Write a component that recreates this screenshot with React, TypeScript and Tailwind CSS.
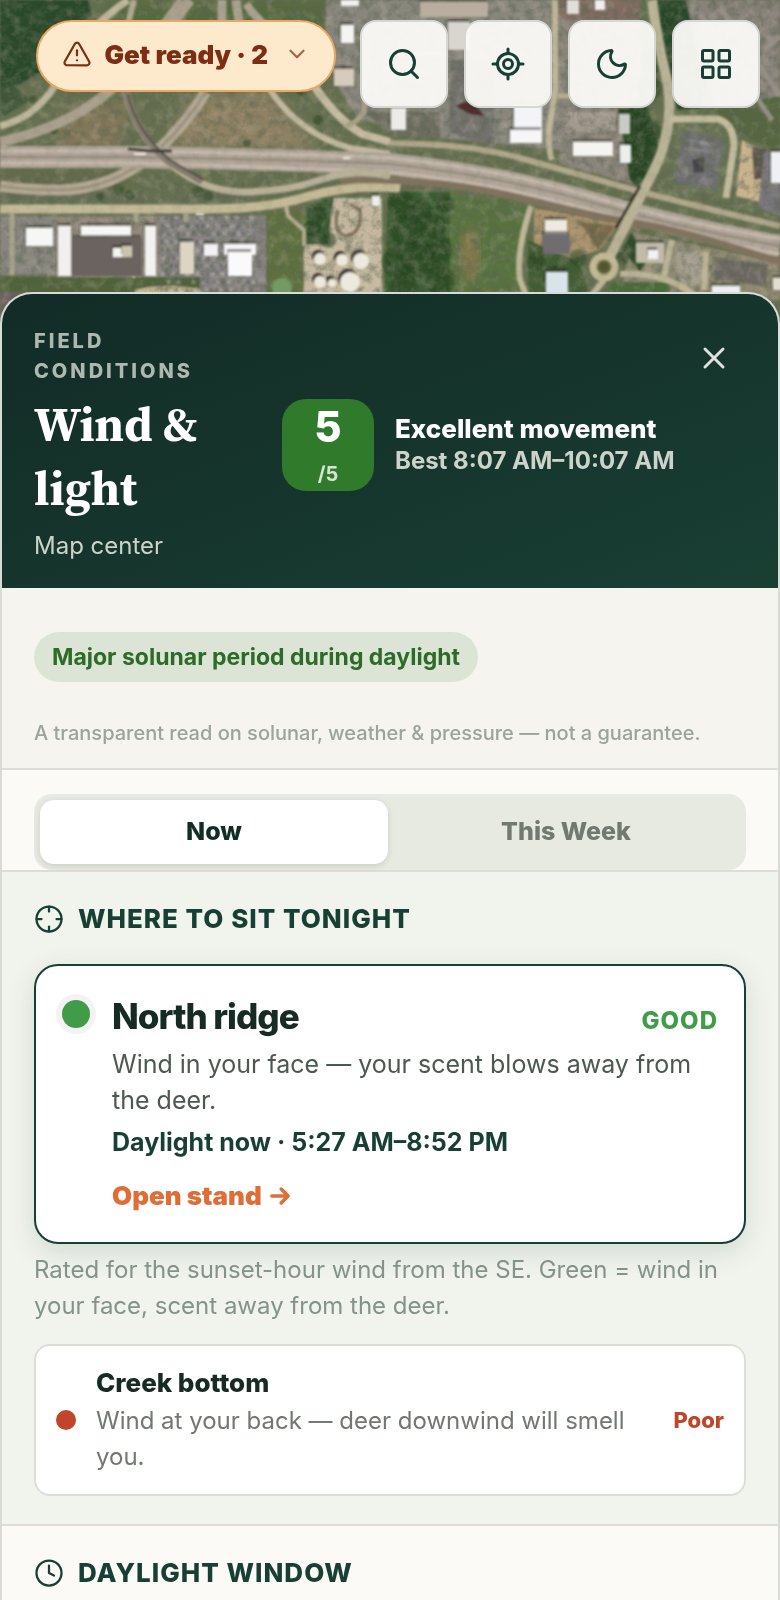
import type { ReactNode } from 'react';
import {
  ChevronDown,
  Clock,
  Crosshair,
  LayoutGrid,
  LocateFixed,
  Moon,
  Search,
  TriangleAlert,
  X,
} from 'lucide-react';

type Block = [x: number, y: number, w: number, h: number, fill: string];

const roofs: Block[] = [
  [26, 228, 27, 18, '#f6f6f5'],
  [58, 226, 13, 50, '#f1f0ee'],
  [81, 226, 50, 10, '#f7f7f6'],
  [145, 226, 11, 50, '#f3f2f0'],
  [72, 238, 70, 38, '#6b6460'],
  [113, 248, 12, 9, '#f5f4f0'],
  [122, 246, 10, 11, '#cbc3ae'],
  [180, 242, 14, 32, '#ddd5c2'],
  [204, 244, 14, 12, '#f3f2f2'],
  [224, 244, 32, 11, '#f6f6f6'],
  [228, 252, 24, 24, '#fafafa'],
  [341, 25, 13, 18, '#f4f4f2'],
  [334, 69, 20, 17, '#d6cbbd'],
  [341, 0, 18, 6, '#f3f1ee'],
  [420, 2, 68, 15, '#b9ad9f'],
  [448, 22, 22, 28, '#d9d5cf'],
  [391, 108, 15, 22, '#ebebe8'],
  [514, 106, 28, 27, '#f2f4f6'],
  [510, 130, 32, 13, '#f6f6f6'],
  [573, 142, 40, 14, '#f5f4f1'],
  [619, 114, 11, 20, '#c8ccc4'],
  [620, 145, 11, 18, '#eceeee'],
  [567, 0, 12, 14, '#e2dfda'],
  [595, 0, 10, 10, '#f0efed'],
  [545, 220, 22, 14, '#eeeae2'],
  [543, 234, 27, 20, '#6f6d70'],
  [546, 272, 22, 22, '#d9e3ea'],
  [636, 243, 28, 20, '#c2bba9'],
  [648, 250, 10, 9, '#f1f2f4'],
  [712, 286, 28, 12, '#edeff2'],
  [771, 152, 12, 31, '#eef0f4'],
  [773, 278, 12, 12, '#e4ded1'],
  [372, 196, 8, 10, '#efeeec'],
];

const trees: [number, number, number][] = [
  [402, 205, 14], [420, 212, 12], [408, 232, 17], [434, 226, 12], [398, 262, 16],
  [418, 258, 18], [438, 250, 14], [445, 205, 9], [440, 280, 15], [404, 286, 14],
  [628, 205, 7], [640, 110, 10], [648, 132, 13], [636, 152, 12], [640, 172, 11],
  [660, 20, 9], [654, 60, 13], [650, 88, 12], [536, 262, 9], [556, 276, 12],
  [578, 258, 9], [320, 212, 9], [312, 228, 9], [328, 240, 8], [622, 258, 7],
  [118, 190, 6], [130, 195, 5], [198, 192, 6], [208, 196, 5], [100, 197, 4],
  [302, 90, 6], [318, 120, 5], [247, 143, 4], [54, 130, 4], [33, 100, 4],
];

const cars = Array.from({ length: 190 }, (_, i) => {
  const column = i % 19;
  const row = Math.floor(i / 19);
  return { x: 160 + column * 5 + (row % 3), y: 216 + row * 8, light: (i * 7) % 5 < 2 };
});

function Satellite() {
  return (
    <svg
      className="absolute inset-x-0 top-0 h-[340px] w-full"
      viewBox="0 0 780 340"
      preserveAspectRatio="xMidYMin slice"
      aria-hidden="true"
    >
      <defs>
        <filter id="grain" x="0" y="0" width="100%" height="100%">
          <feTurbulence type="fractalNoise" baseFrequency="0.11" numOctaves="4" seed="8" />
          <feColorMatrix values="0 0 0 0 0.1  0 0 0 0 0.13  0 0 0 0 0.08  1.9 0 0 0 -0.8" />
        </filter>
        <filter id="glints" x="0" y="0" width="100%" height="100%">
          <feTurbulence type="fractalNoise" baseFrequency="0.09" numOctaves="3" seed="31" />
          <feColorMatrix values="0 0 0 0 0.72  0 0 0 0 0.6  0 0 0 0 0.5  0 1.8 0 0 -0.85" />
        </filter>
        <filter id="soften">
          <feGaussianBlur stdDeviation="0.8" />
        </filter>
        <filter id="blotch">
          <feGaussianBlur stdDeviation="7" />
        </filter>
      </defs>

      <rect width="780" height="340" fill="#667050" />

      <g filter="url(#blotch)">
        <path d="M60 110L130 100 120 150H60z" fill="#83775a" />
        <path d="M185 100L270 92 320 150H170z" fill="#8f8163" />
        <path d="M110 0H330V60H90z" fill="#56693f" />
        <path d="M0 170H130V190H0z" fill="#62694b" />
        <ellipse cx="500" cy="240" rx="18" ry="46" fill="#52703c" />
        <ellipse cx="284" cy="260" rx="15" ry="34" fill="#6c6d44" />
      </g>

      <g filter="url(#soften)">
        <path d="M0 0H88L92 14 62 38 44 70 20 84 0 88z" fill="#2b4a2b" />
        <path d="M0 88L14 86 30 100 4 116 0 112z" fill="#3d5737" />
        <path d="M326 0H560V150L420 136 390 128 358 118 340 90 326 50z" fill="#89867e" />
        <path d="M365 112H440V138L390 134z" fill="#6e6e60" />
        <path d="M450 60H494V148L450 132z" fill="#73716c" />
        <path d="M560 0H640V186L560 164z" fill="#8a847a" />
        <path d="M566 112H616V132H566z" fill="#a3998f" />
        <path d="M556 0H640V20H556z" fill="#806c62" />
        <path d="M618 108H648L662 160 640 190 630 180z" fill="#2f4c2b" />
        <path d="M648 0H690L712 70 700 108 678 110z" fill="#2c4a2b" />
        <path d="M686 0H780V150L744 126 716 108 700 60z" fill="#88827a" />
        <path d="M710 108L780 96V150L746 138z" fill="#55663f" />
        <path d="M0 216H60V275H0z" fill="#898680" />
        <path d="M56 216H160V280H56z" fill="#92887c" />
        <path d="M158 216H266V292H204L158 278z" fill="#868382" />
        <path d="M0 277H200V300H0z" fill="#4f6439" />
        <path d="M135 290Q165 282 203 290V300H135z" fill="#c3b894" />
        <path d="M266 212H306V300H266z" fill="#5f7040" />
        <path d="M304 245H382V300H304z" fill="#c5b8a0" />
        <path d="M330 198H382V248H330z" fill="#c3b79f" />
        <path d="M306 206L334 196 328 244H306z" fill="#3a5831" />
        <path d="M388 192L450 192 456 300H384z" fill="#3b5b31" />
        <path d="M450 194L526 208 520 300H450z" fill="#58723f" />
        <path d="M534 208L620 222 600 250 560 262 534 250z" fill="#a9916d" />
        <path d="M580 222L616 226 598 250z" fill="#786b4b" />
        <path d="M528 240L580 262 590 300H528z" fill="#3f5b33" />
        <path d="M632 232L780 262V300H620z" fill="#8f8a72" />
        <path d="M622 250L632 232 646 262 640 272z" fill="#2f4c2a" />
        <path d="M612 282H670V300H604z" fill="#4c6b3a" />
        <path d="M676 128L728 136 722 196 672 190z" fill="#6d7658" />
        <path d="M684 130L724 140 716 188 674 184z" fill="#706f71" />
        <path d="M692 160L704 157 704 172 694 173z" fill="#474549" />
        <path d="M686 140L714 145M684 148L712 152" stroke="#85848a" strokeWidth="3" />
        <path d="M742 140L762 150 760 202 736 196z" fill="#c9b38d" />
        <path d="M752 146L766 150 764 178 754 180z" fill="#5c5249" />
        <path d="M764 152H780V216L758 208z" fill="#7a777d" />
        <path d="M716 258L768 264 766 286 714 280z" fill="#6c6862" />
        <path d="M674 246L704 252 708 284 680 290z" fill="#a39d8d" />
        <path d="M0 292H26L16 320H0z" fill="#6b6060" />
      </g>
      <ellipse cx="470" cy="254" rx="9" ry="26" fill="#a07d55" opacity="0.8" filter="url(#blotch)" />

      {trees.map(([cx, cy, r]) => (
        <circle key={`${cx}-${cy}`} cx={cx} cy={cy} r={r} fill="#24401f" opacity="0.5" filter="url(#soften)" />
      ))}
      <g filter="url(#soften)">
        {cars.map(({ x, y, light }) => (
          <rect key={`${x}-${y}`} x={x} y={y} width="3" height="4" fill={light ? '#bdbabc' : '#5b5656'} opacity="0.5" />
        ))}
      </g>

      <rect width="780" height="340" filter="url(#grain)" opacity="0.6" />
      <rect width="780" height="340" filter="url(#glints)" opacity="0.3" />

      <g fill="none" strokeLinejoin="round" filter="url(#soften)">
        <path d="M0 126Q42 116 62 72 84 30 128 0" stroke="#beb89d" strokeWidth="7" />
        <path d="M0 142Q66 128 108 92T190 0" stroke="#aaa18e" strokeWidth="10" />
        <path d="M134 0L124 40 94 88" stroke="#b0a892" strokeWidth="6" />
        <path d="M206 92Q186 124 156 152 112 190 58 190 24 190 0 186" stroke="#b3a994" strokeWidth="11" />
        <path d="M206 92Q186 124 156 152 112 190 58 190 24 190 0 186" stroke="#958b79" strokeWidth="2" />
        <path d="M182 0L160 30M222 0V30M236 0L240 30" stroke="#aaa28f" strokeWidth="9" />
        <path d="M246 4Q262 26 278 34" stroke="#aca48f" strokeWidth="8" />
        <path d="M270 90Q300 134 350 148L390 154" stroke="#c2b9a0" strokeWidth="6" />
        <path d="M306 74Q334 118 362 134L390 142" stroke="#c6bca2" strokeWidth="8" />
        <path d="M0 209H200Q262 210 306 197T400 188" stroke="#c5ba98" strokeWidth="9" />
        <path d="M0 157H130Q300 160 390 164 500 176 590 202T780 246" stroke="#b0a597" strokeWidth="22" />
        <path d="M0 157H130Q300 160 390 164 500 176 590 202T780 246" stroke="#93887c" strokeWidth="2" />
        <path d="M0 163H130Q300 168 390 172 500 184 590 210T780 254" stroke="#c7baad" strokeWidth="3" />
        <path d="M0 151H130Q300 154 390 158 500 169 590 196T780 239" stroke="#c6bbad" strokeWidth="3" />
        <path d="M340 180Q440 178 520 198T640 224 780 262" stroke="#81735e" strokeWidth="7" />
        <path d="M125 90Q134 132 168 162 200 190 240 192 286 192 320 180T390 176" stroke="#bab199" strokeWidth="7" />
        <path d="M125 90Q134 132 168 162L202 182" stroke="#857c70" strokeWidth="6" />
        <path d="M128 94Q137 132 170 160L204 180" stroke="#4f4842" strokeWidth="2" />
        <path d="M390 143Q470 144 520 158T620 186 780 226" stroke="#b1a78d" strokeWidth="6" />
        <path d="M128 149L150 151 172 151" stroke="#3b3935" strokeWidth="3" />
        <path d="M555 0V90L549 130Q548 150 552 160" stroke="#bfb69a" strokeWidth="6" />
        <path d="M390 54H448M558 96H574" stroke="#b9b092" strokeWidth="5" />
        <path d="M368 40Q366 90 364 112 356 124 346 126" stroke="#a9a088" strokeWidth="5" />
        <path d="M652 0Q658 46 668 84 674 130 654 170L610 256" stroke="#bbb499" strokeWidth="10" />
        <path d="M640 186L616 228" stroke="#3b332c" strokeWidth="3" />
        <path d="M670 119H718Q734 124 734 146L726 198" stroke="#c3bb9e" strokeWidth="7" />
        <path d="M531 206Q516 250 520 280L528 300" stroke="#c0b899" strokeWidth="6" />
        <path d="M620 274Q670 272 700 300M604 280L588 300M664 276L672 240M706 252L704 290" stroke="#beb598" strokeWidth="6" />
        <path d="M286 206L288 216 304 230V246" stroke="#b7af92" strokeWidth="4" />
        <path d="M338 210Q332 232 346 236 362 234 360 210L350 204" stroke="#80705b" strokeWidth="3" />
        <circle cx="604" cy="267" r="11" stroke="#c3b997" strokeWidth="7" fill="#6a6a3d" />
        <circle cx="604" cy="267" r="5" fill="#4f5630" />
        <path d="M12 214V275M186 214V222M136 214V222" stroke="#aaa58d" strokeWidth="5" />
        <path d="M128 256L134 278" stroke="#cfcac0" strokeWidth="2" />
        <path d="M700 14L772 120M720 8L780 96M764 50L780 36" stroke="#989087" strokeWidth="5" />
      </g>

      <rect width="780" height="340" filter="url(#grain)" opacity="0.15" />

      <g filter="url(#soften)">
        {roofs.map(([x, y, w, h, fill]) => (
          <g key={`${x}-${y}`}>
            <rect x={x - 1} y={y - 3} width={w} height={h} fill="#2d2825" opacity="0.5" />
            <rect x={x} y={y} width={w} height={h} fill={fill} />
          </g>
        ))}
        {[[320, 259, 6], [342, 260, 6], [361, 261, 8], [320, 282, 6], [332, 283, 4], [350, 282, 10]].map(
          ([cx, cy, r]) => (
            <g key={`${cx}-${cy}`}>
              <circle cx={cx - 2} cy={cy - 3} r={r} fill="#3b332b" />
              <circle cx={cx} cy={cy} r={r} fill="#eee9de" />
            </g>
          ),
        )}
        <circle cx="282" cy="288" r="10" fill="#719b62" />
        <path d="M465 102L474 103 484 116 470 114 456 106z" fill="#4f2f2e" />
        <path d="M134 154H146M343 158H350M196 214H204" stroke="#f0eee8" strokeWidth="2" />
      </g>
    </svg>
  );
}

function MapButton({ label, children }: { label: string; children: ReactNode }) {
  return (
    <button
      type="button"
      aria-label={label}
      className="flex size-22 shrink-0 items-center justify-center rounded-2xl border-2 border-[#d5d8d1] bg-[#fbfaf7]/95 text-[#173f33]"
    >
      {children}
    </button>
  );
}

function SectionTitle({ icon, children }: { icon: ReactNode; children: ReactNode }) {
  return (
    <h2 className="flex items-center gap-[14px] text-[26px] leading-[38px] font-extrabold tracking-[1px] text-[#173f33]">
      {icon}
      {children}
    </h2>
  );
}

export default function App() {
  return (
    <div className="relative flex min-h-screen flex-col overflow-hidden bg-[#fbfaf6] font-['Inter','Liberation_Sans',sans-serif] text-[#172b25]">
      <Satellite />

      <header className="relative flex items-start justify-end gap-4 px-5 pt-5">
        <button
          type="button"
          className="mr-2 flex h-18 items-center gap-3 rounded-full border-2 border-[#eba765] bg-[#fdeacc] px-6 pb-1 text-[26px] font-black text-[#7d2d12]"
        >
          <TriangleAlert size={30} strokeWidth={1.8} />
          <span>Get ready · 2</span>
          <ChevronDown size={26} className="ml-1 opacity-70" />
        </button>
        <MapButton label="Search"><Search size={36} /></MapButton>
        <MapButton label="My location"><LocateFixed size={36} /></MapButton>
        <MapButton label="Dark mode"><Moon size={36} /></MapButton>
        <MapButton label="Layers"><LayoutGrid size={36} /></MapButton>
      </header>

      <main className="relative mt-46 grow overflow-hidden rounded-t-[32px] border-2 border-b-0 border-[#d9dcd6] bg-[#fbfaf6]">
        <section className="flex items-start bg-linear-160 from-[#122b26] to-[#193f33] px-8 pt-8 pb-6 text-white">
          <div className="w-50 shrink-0">
            <p className="text-[20px] leading-[30px] font-extrabold tracking-[3px] text-[#adb8b0] uppercase">
              Field conditions
            </p>
            <h1 className="mt-[6px] font-['Source_Serif_4','Source_Serif_Pro','Liberation_Serif',serif] text-[48px] leading-16 font-bold">
              Wind &amp; light
            </h1>
            <p className="mt-2 text-[24px] leading-9 text-[#ccd3cb]">Map center</p>
          </div>
          <div className="ml-12 flex grow items-center gap-[21px] self-center">
            <div className="flex size-23 shrink-0 flex-col items-center justify-between rounded-3xl bg-[#307a2b]">
              <strong className="text-[42px] leading-[56px] font-extrabold">5</strong>
              <span className="text-[20px] leading-[34px] font-bold text-[#d5e5d3]">/5</span>
            </div>
            <div>
              <p className="text-[26px] leading-8 font-extrabold">Excellent movement</p>
              <p className="text-[24px] leading-8 font-bold text-[#cdd3cb]">Best 8:07 AM–10:07 AM</p>
            </div>
          </div>
          <button type="button" aria-label="Close" className="flex size-16 shrink-0 items-center justify-center text-[#dfe2dc]">
            <X size={36} />
          </button>
        </section>

        <section className="border-b-2 border-[#dddcd6] bg-[#f6f4ef] px-8 pt-11 pb-5">
          <p className="w-fit rounded-full bg-[#dce5d5] px-[18px] text-[23px] leading-[50px] font-bold text-[#2d6b28]">
            Major solunar period during daylight
          </p>
          <p className="mt-9 text-[20px] leading-[30px] font-medium text-[#9ba39b]">
            A transparent read on solunar, weather &amp; pressure — not a guarantee.
          </p>
        </section>

        <div className="border-b-2 border-[#dddcd6] px-8 pt-6">
          <div role="tablist" className="grid grid-cols-2 gap-1 rounded-[18px] bg-[#e7eae1] p-[6px] text-[25px] font-extrabold">
            <button type="button" role="tab" aria-selected="true" className="h-16 rounded-[14px] bg-white text-[#112d26] shadow-[0_2px_6px_rgba(20,45,35,0.14)]">
              Now
            </button>
            <button type="button" role="tab" aria-selected="false" className="h-16 rounded-[14px] text-[#717971]">
              This Week
            </button>
          </div>
        </div>

        <section className="border-b-2 border-[#dddcd6] bg-[#f1f4ed] px-8 pt-7 pb-7">
          <SectionTitle icon={<Crosshair size={30} strokeWidth={1.8} />}>WHERE TO SIT TONIGHT</SectionTitle>

          <article className="mt-[26px] flex items-start gap-[22px] rounded-3xl border-2 border-[#173f33] bg-white px-[26px] pt-[26px] pb-7 shadow-[0_8px_28px_rgba(23,63,51,0.14)]">
            <span className="mt-2 size-7 shrink-0 rounded-full bg-[#419c48] ring-6 ring-[#f3f3f4]" />
            <div className="grow">
              <div className="flex items-baseline justify-between">
                <h3 className="text-[35px] leading-12 font-extrabold tracking-[-1px]">North ridge</h3>
                <strong className="text-[24px] font-extrabold tracking-[1px] text-[#419c48]">GOOD</strong>
              </div>
              <p className="mt-[6px] text-[25px] leading-9 text-[#4d5851]">
                Wind in your face — your scent blows away from the deer.
              </p>
              <p className="mt-[6px] text-[25px] leading-9 font-bold text-[#173f33]">Daylight now · 5:27 AM–8:52 PM</p>
              <a href="#north-ridge" className="mt-[18px] flex items-center gap-1 text-[26px] leading-9 font-black text-[#df6d37]">
                Open stand
                <svg viewBox="0 0 24 24" className="size-7" fill="none" stroke="currentColor" strokeWidth="3" strokeLinecap="round" strokeLinejoin="round" aria-hidden="true">
                  <path d="M5 12h14M13 6l6 6-6 6" />
                </svg>
              </a>
            </div>
          </article>

          <p className="mt-2 text-[24px] leading-9 text-[#84938a]">
            Rated for the sunset-hour wind from the SE. Green = wind in your face, scent away from the deer.
          </p>

          <article className="mt-5 flex items-center gap-5 rounded-2xl border-2 border-[#deded8] bg-white px-5 pt-[19px] pb-[19px]">
            <span className="size-5 shrink-0 rounded-full bg-[#c1452b]" />
            <div className="grow">
              <h3 className="text-[26px] leading-9 font-extrabold">Creek bottom</h3>
              <p className="mt-[2px] text-[24px] leading-9 text-[#707870]">Wind at your back — deer downwind will smell you.</p>
            </div>
            <strong className="text-[22px] font-extrabold text-[#c1452b]">Poor</strong>
          </article>
        </section>

        <section className="px-8 pt-7 pb-2">
          <SectionTitle icon={<Clock size={30} strokeWidth={1.8} />}>DAYLIGHT WINDOW</SectionTitle>
        </section>
      </main>
    </div>
  );
}
